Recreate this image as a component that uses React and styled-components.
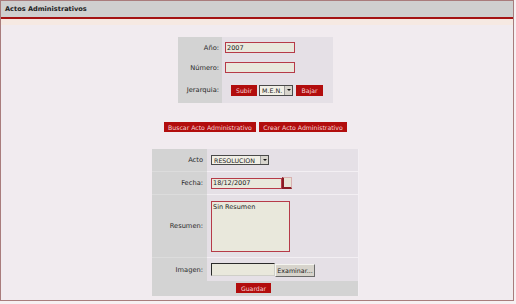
import styled, { createGlobalStyle } from "styled-components"

const Global = createGlobalStyle`
  html, body { margin: 0; padding: 0; background: #f6f0f2; }
  body { font-family: "DejaVu Sans", Verdana, sans-serif; }
`

const Frame = styled.div`
  width: 512px;
  height: 299px;
  border: 1px solid #a97c7c;
  background: #f1ebef;
  display: flex;
  flex-direction: column;
`

const Header = styled.div`
  height: 16px;
  background: #cfcfcf;
  border-bottom: 2px solid #a41414;
  display: flex;
  align-items: center;
  padding-left: 4px;
  font-weight: bold;
  font-size: 6.6px;
  color: #1e1e1e;
`

const Band = styled.div`
  height: 6px;
  background: #f6e9e2;
`

const Content = styled.div`
  display: flex;
  flex-direction: column;
  align-items: center;
  padding: 12px 3px 0 0;
`

const SearchBox = styled.div`
  width: 155px;
  display: grid;
  grid-template-columns: 44px 1fr;
  grid-template-rows: 21px 19px 26px;
`

const FormBox = styled.div`
  width: 206px;
  margin-top: 17px;
  display: grid;
  grid-template-columns: 55px 1fr;
  grid-template-rows: 23px 23px 63px 23px 15px;
  border-right: 1px solid #f3eff3;
`

const Label = styled.div`
  background: #d3d3d3;
  display: flex;
  align-items: center;
  justify-content: flex-end;
  padding-right: ${p => p.$pad || 3}px;
  font-size: 6.7px;
  color: #2a2a2a;
  border-bottom: ${p => (p.$lined ? "1px solid #dcdcdc" : "none")};
`

const Cell = styled.div`
  background: #e5e0e6;
  display: flex;
  align-items: ${p => (p.$top ? "flex-start" : "center")};
  padding-left: ${p => p.$pad || 3}px;
  padding-top: ${p => (p.$top ? 6 : 0)}px;
  border-bottom: ${p => (p.$lined ? "1px solid #f3eff3" : "none")};
`

const TextBox = styled.div`
  box-sizing: border-box;
  width: ${p => p.$w}px;
  height: ${p => p.$h || 11}px;
  border: 1px solid #b63a48;
  background: #e9e8dc;
  font-size: 6.5px;
  color: #1c1c1c;
  padding: ${p => (p.$multi ? "1px 1px" : "0 1px")};
  display: flex;
  align-items: ${p => (p.$multi ? "flex-start" : "center")};
`

const FileBox = styled.div`
  box-sizing: border-box;
  width: 64px;
  height: 13px;
  background: #e9e8dc;
  border: 1px solid #2a2a2a;
  border-right-color: #cfcfc8;
  border-bottom-color: #cfcfc8;
`

const Browse = styled.div`
  box-sizing: border-box;
  width: 40px;
  height: 13px;
  margin-top: 1px;
  background: #d7d4cc;
  border: 1px solid #f4f4f0;
  border-right-color: #6a6a6a;
  border-bottom-color: #6a6a6a;
  font-size: 6.3px;
  color: #222;
  display: flex;
  align-items: center;
  justify-content: center;
`

const Calendar = styled.div`
  box-sizing: border-box;
  width: 10px;
  height: 12px;
  background: #e7e3d6;
  border: 1px solid #d9b0b0;
  border-left: 2px solid #8a1c24;
  border-bottom: 2px solid #8a1c24;
`

const Select = styled.div`
  box-sizing: border-box;
  width: ${p => p.$w}px;
  height: ${p => p.$h || 10}px;
  background: #f1efe6;
  border: 1px solid #4a4a4a;
  font-size: 6.3px;
  color: #1c1c1c;
  display: flex;
  align-items: center;
  justify-content: space-between;
  padding-left: 2px;
`

const Arrow = styled.span`
  width: 7px;
  height: 100%;
  background: #d8d5cd;
  border-left: 1px solid #9a9a9a;
  display: flex;
  align-items: center;
  justify-content: center;
  &::after {
    content: "";
    border-left: 2px solid transparent;
    border-right: 2px solid transparent;
    border-top: 2px solid #111;
  }
`

const Button = styled.div`
  box-sizing: border-box;
  width: ${p => p.$w}px;
  height: ${p => p.$h || 11}px;
  background: #b20d0d;
  color: #f6d6d6;
  font-size: 6.2px;
  display: flex;
  align-items: center;
  justify-content: center;
  white-space: nowrap;
`

const Row = styled.div`
  display: flex;
  align-items: center;
  gap: ${p => p.$gap || 0}px;
  margin-left: ${p => p.$ml || 0}px;
  margin-top: ${p => p.$mt || 0}px;
`

const Footer = styled.div`
  grid-column: 1 / 3;
  background: #d3d3d3;
  display: flex;
  justify-content: center;
  padding-top: 2px;
  padding-right: 3px;
`

export default function App() {
  return (
    <>
      <Global />
      <Frame>
        <Header>Actos Administrativos</Header>
        <Band />
        <Content>
          <SearchBox>
            <Label>Año:</Label>
            <Cell><TextBox $w={70}>2007</TextBox></Cell>
            <Label>Número:</Label>
            <Cell><TextBox $w={70} /></Cell>
            <Label>Jerarquia:</Label>
            <Cell>
              <Row $ml={6}>
                <Button $w={26}>Subir</Button>
                <Select $w={34} $h={11} style={{ marginLeft: 2 }}>M.E.N.<Arrow /></Select>
                <Button $w={27} style={{ marginLeft: 3 }}>Bajar</Button>
              </Row>
            </Cell>
          </SearchBox>

          <Row $gap={3} $mt={19}>
            <Button $w={92} $h={10}>Buscar Acto Administrativo</Button>
            <Button $w={88} $h={10}>Crear Acto Administrativo</Button>
          </Row>

          <FormBox>
            <Label $pad={4} $lined>Acto</Label>
            <Cell $pad={4} $lined><Select $w={58}>RESOLUCION<Arrow /></Select></Cell>
            <Label $pad={4} $lined>Fecha:</Label>
            <Cell $pad={4} $lined>
              <TextBox $w={71}>18/12/2007</TextBox>
              <Calendar />
            </Cell>
            <Label $pad={4} $lined>Resumen:</Label>
            <Cell $pad={4} $lined $top>
              <TextBox $w={79} $h={51} $multi>Sin Resumen</TextBox>
            </Cell>
            <Label $pad={4}>Imagen:</Label>
            <Cell $pad={4}>
              <FileBox />
              <Browse>Examinar...</Browse>
            </Cell>
            <Footer>
              <Button $w={35} $h={10}>Guardar</Button>
            </Footer>
          </FormBox>
        </Content>
      </Frame>
    </>
  )
}
